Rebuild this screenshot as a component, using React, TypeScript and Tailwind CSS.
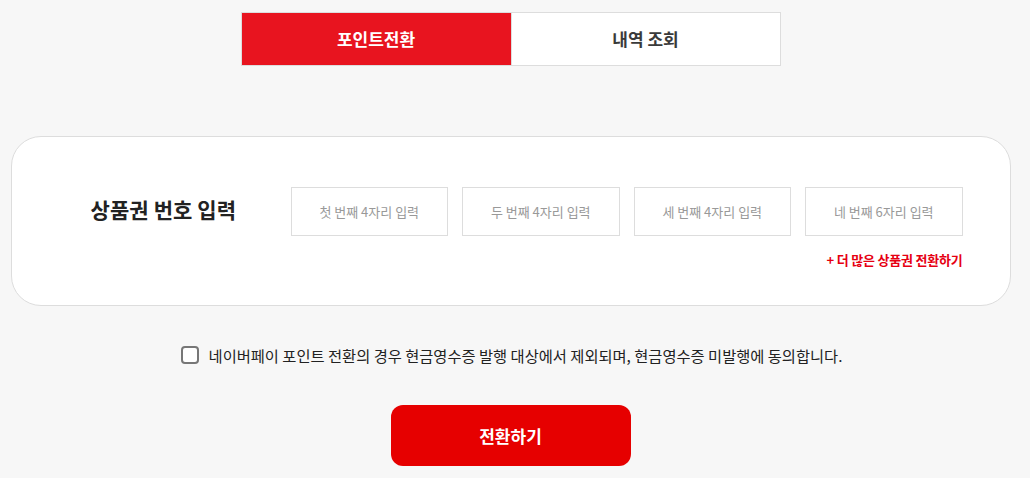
export default function App() {
  const inputs = ["첫 번째 4자리 입력", "두 번째 4자리 입력", "세 번째 4자리 입력", "네 번째 6자리 입력"];
  return (
    <div
      className="min-h-[478px] w-[1030px] bg-[#f7f7f7] pr-[9px]"
      style={{ fontFamily: '"Noto Sans CJK KR", "Noto Sans", sans-serif' }}
    >
      <div className="mx-auto flex w-[1000px] flex-col items-center pt-3">
        <div className="flex h-[54px] w-[540px] border border-[#dddddd] bg-white">
          <div className="flex w-[269px] items-center justify-center bg-[#e8141f] text-[17px] font-bold text-white">
            포인트전환
          </div>
          <div className="flex flex-1 items-center justify-center border-l border-[#dddddd] text-[17px] font-bold text-[#3a3a3a]">
            내역 조회
          </div>
        </div>

        <div className="mt-[70px] w-[1000px] h-[170px] rounded-[30px] border border-[#dddddd] bg-white pl-[79px] pr-[47px] pt-[50px]">
          <div className="flex items-center">
            <div className="w-[200px] pb-[4px] text-[21px] font-bold tracking-[0.1px] text-[#222]">상품권 번호 입력</div>
            <div className="flex gap-[14px]">
              {inputs.map((p) => (
                <input
                  key={p}
                  placeholder={p}
                  className="h-[49px] w-[157.5px] border border-[#dddddd] bg-white text-center text-[13px] text-[#333] placeholder:text-[#999] outline-none"
                />
              ))}
            </div>
          </div>
          <div className="mt-[14px] flex justify-end">
            <span className="text-[13px] font-bold tracking-[-0.2px] text-[#e60012]">+ 더 많은 상품권 전환하기</span>
          </div>
        </div>

        <label className="mt-[38px] flex items-center gap-[10px] pl-[2px]">
          <span className="h-[18px] w-[18px] rounded-[4px] border-2 border-[#777] bg-white" />
          <span className="text-[15.3px] text-[#222]">
            네이버페이 포인트 전환의 경우 현금영수증 발행 대상에서 제외되며, 현금영수증 미발행에 동의합니다.
          </span>
        </label>

        <button className="mt-[38px] flex h-[61px] w-[240px] items-center justify-center rounded-[12px] bg-[#e60000] text-[17px] font-bold text-white">
          전환하기
        </button>
      </div>
    </div>
  );
}
